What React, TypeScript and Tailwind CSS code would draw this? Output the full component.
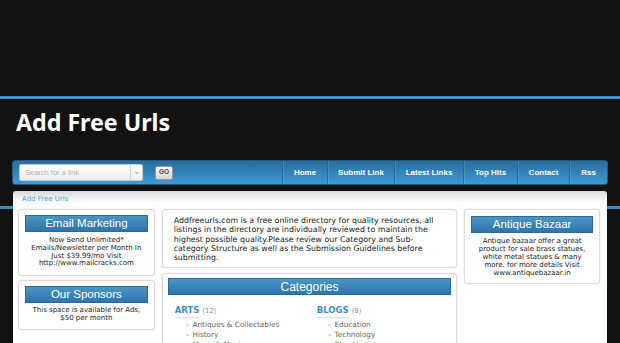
import { ChevronDown } from 'lucide-react';

const navLinks = [
  { label: 'Home', w: 'w-[45px]' },
  { label: 'Submit Link', w: 'w-[67px]' },
  { label: 'Latest Links', w: 'w-[69px]' },
  { label: 'Top Hits', w: 'w-[54px]' },
  { label: 'Contact', w: 'w-[52px]' },
  { label: 'Rss', w: 'w-[38px]' },
];

const arts = ['Antiques & Collectables', 'History', 'Music & Movies'];
const blogs = ['Education', 'Technology', 'Blog Hosting'];

function BoxTitle({ children }: { children: string }) {
  return (
    <div className="h-[17px] flex items-center justify-center bg-gradient-to-b from-[#4a95c8] to-[#2e75aa] border border-[#2a6a9a] text-white text-[11.5px] leading-none font-['Liberation_Sans',Arial,sans-serif]">
      {children}
    </div>
  );
}

function Box({ className = '', children }: { className?: string; children: React.ReactNode }) {
  return (
    <div className={`bg-white border border-[#dcdcdc] rounded-[3px] shadow-[0_0_2px_rgba(0,0,0,0.12)] ${className}`}>
      {children}
    </div>
  );
}

function CategoryList({ title, count, items }: { title: string; count: number; items: string[] }) {
  return (
    <div>
      <div className="flex items-baseline gap-[3px]">
        <span className="text-[#3a8fd0] font-bold text-[8.5px] shadow-[0_1px_1px_rgba(0,0,0,0.12)]">{title}</span>
        <span className="text-[#888] text-[6.8px]">({count})</span>
      </div>
      <ul className="mt-[3px] ml-[11px] text-[#666] text-[7.3px] leading-[10px]">
        {items.map((it) => (
          <li key={it} className="whitespace-nowrap">
            <span className="text-[#999] text-[6px] mr-[3px]">&#187;</span>
            {it}
          </li>
        ))}
      </ul>
    </div>
  );
}

export default function App() {
  return (
    <div className="w-[620px] h-[343px] overflow-hidden bg-[linear-gradient(to_bottom,#121212_0,#121212_206px,#3a88c8_206px,#3a88c8_209px,#121212_209px)] font-['DejaVu_Sans',Verdana,sans-serif]">
      {/* top band */}
      <div className="h-[96px]" />
      <div className="h-[3px] bg-gradient-to-b from-[#2f78b5] via-[#5aa6e0] to-[#2f78b5]" />

      {/* logo */}
      <div className="h-[61px] pl-[16px] pt-[8px]">
        <h1 className="text-white font-bold text-[23.2px] leading-[30px] font-['Noto_Sans',sans-serif]">
          Add Free Urls
        </h1>
      </div>

      {/* nav bar */}
      <div className="mx-[12px] h-[25px] rounded-[3px] border border-[#1f5a86] bg-gradient-to-b from-[#2a6c9f] to-[#3d9bd3] flex items-center font-['Liberation_Sans',Arial,sans-serif]">
        <div className="ml-[6px] w-[124px] h-[17px] bg-gradient-to-b from-white to-[#ececec] border border-[#c8c8c8] rounded-[2px] flex items-center">
          <span className="flex-1 pl-[5px] text-[#b4b4b4] text-[7.5px] leading-none">Search for a link</span>
          <span className="w-[12px] h-full border-l border-[#d4d4d4] flex items-center justify-center text-[#999]">
            <ChevronDown size={6} strokeWidth={4} />
          </span>
        </div>
        <button className="ml-[12px] w-[18px] h-[14px] rounded-[2px] border border-[#9a9a9a] bg-gradient-to-b from-[#fafafa] to-[#d8d8d8] text-[#444] text-[6.5px] font-bold leading-none flex items-center justify-center">
          GO
        </button>
        <nav className="ml-auto flex h-full">
          {navLinks.map((l) => (
            <a
              key={l.label}
              className={`${l.w} h-full flex items-center justify-center border-l border-l-[#2a6a98] shadow-[inset_1px_0_0_rgba(255,255,255,0.12)] text-white text-[8px] font-bold`}
            >
              {l.label}
            </a>
          ))}
        </nav>
      </div>

      {/* content */}
      <div className="mt-[6px] mx-[13px] h-[200px] rounded-t-[3px] bg-gradient-to-b from-[#d9d9d9] via-white to-white from-0% via-[6%] pl-[5px] pr-[7px]">
        <div className="pl-[4px] pt-[3px] h-[18px] text-[#5aa3d8] text-[7px] leading-[10px]">Add Free Urls</div>
        <div className="flex gap-[7px] items-start">
          {/* left */}
          <div className="w-[137px] flex flex-col gap-[4px]">
            <Box className="h-[67px] px-[6px] pt-[5px]">
              <BoxTitle>Email Marketing</BoxTitle>
              <p className="mt-[5px] text-center text-[#222] text-[7px] leading-[7.8px] whitespace-nowrap">
                Now Send Unlimited*
                <br />
                Emails/Newsletter per Month In
                <br />
                Just $39.99/mo Visit
                <br />
                http://www.mailcracks.com
              </p>
            </Box>
            <Box className="h-[50px] px-[6px] pt-[5px]">
              <BoxTitle>Our Sponsors</BoxTitle>
              <p className="mt-[4px] text-center text-[#222] text-[7px] leading-[7.8px] whitespace-nowrap">
                This space is available for Ads,
                <br />
                $50 per month
              </p>
            </Box>
          </div>

          {/* middle */}
          <div className="w-[296px] flex flex-col gap-[5px]">
            <Box className="h-[59px] pl-[11px] pr-[4px] pt-[6px]">
              <p className="text-[#222] text-[7.85px] leading-[9.3px] whitespace-nowrap">
                Addfreeurls.com is a free online directory for quality resources, all
                <br />
                listings in the directory are individually reviewed to maintain the
                <br />
                highest possible quality.Please review our Category and Sub-
                <br />
                category Structure as well as the Submission Guidelines before
                <br />
                submitting.
              </p>
            </Box>
            <Box className="h-[90px] px-[5px] pt-[4px]">
              <div className="h-[17px] flex items-center justify-center bg-gradient-to-b from-[#4a95c8] to-[#2e75aa] border border-[#2a6a9a] text-white text-[12px] leading-none font-['Liberation_Sans',Arial,sans-serif]">
                Categories
              </div>
              <div className="mt-[9px] pl-[7px] grid grid-cols-[142px_1fr]">
                <CategoryList title="ARTS" count={12} items={arts} />
                <CategoryList title="BLOGS" count={9} items={blogs} />
              </div>
            </Box>
          </div>

          {/* right */}
          <Box className="w-[136px] h-[75px] px-[6px] pt-[6px]">
            <BoxTitle>Antique Bazaar</BoxTitle>
            <p className="mt-[4px] text-center text-[#222] text-[7px] leading-[8px] whitespace-nowrap">
              Antique bazaar offer a great
              <br />
              product for sale brass statues,
              <br />
              white metal statues &amp; many
              <br />
              more. for more details Visit
              <br />
              www.antiquebazaar.in
            </p>
          </Box>
        </div>
      </div>
    </div>
  );
}
